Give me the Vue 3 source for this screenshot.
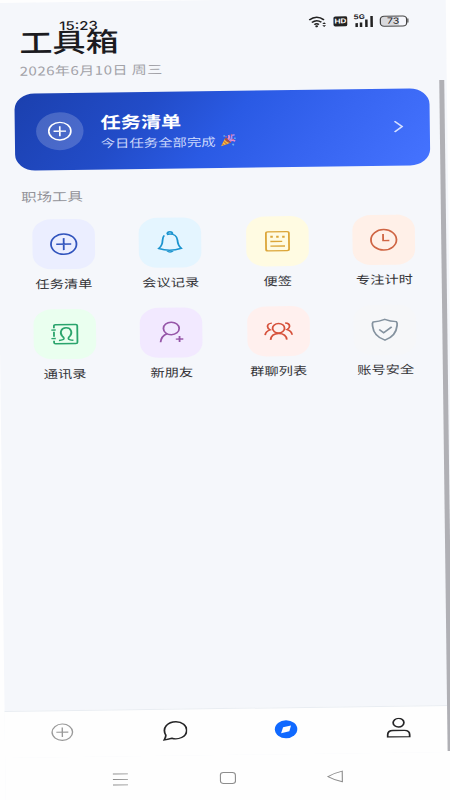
<script setup>
const tools = [
  { name: '任务清单', icon: 'plus', tone: 'indigo' },
  { name: '会议记录', icon: 'bell', tone: 'sky' },
  { name: '便签', icon: 'note', tone: 'yellow' },
  { name: '专注计时', icon: 'clock', tone: 'orange' },
  { name: '通讯录', icon: 'contacts', tone: 'green' },
  { name: '新朋友', icon: 'friend', tone: 'purple' },
  { name: '群聊列表', icon: 'group', tone: 'red' },
  { name: '账号安全', icon: 'shield', tone: 'gray' },
]
</script>

<template>
  <div class="viewport">
    <div class="screen">
      <div class="status">
        <span class="time">15:23</span>
        <div class="signals">
          <svg class="wifi" viewBox="0 0 15 12">
            <path d="M.6 4.300Q6.500-1 12.400 4.300M2.700 6.700Q6.500 3.300 10.300 6.700M4.700 9Q6.500 7.300 8.300 9" fill="none" stroke="#222" stroke-width="1.500" />
            <circle cx="6.500" cy="10.700" r="1.100" fill="#222" />
            <path d="M11 8.500l1.500-1.800 1.500 1.800zM11 9.700l1.500 1.800 1.500-1.800z" fill="#222" />
          </svg>
          <span class="hd">HD</span>
          <div class="cell">
            <span class="gen">5G</span>
            <svg viewBox="0 0 16 12">
              <path d="M2.500 8v4M6 7.500V12M10.300 4.500V12M14.500 1v11" fill="none" stroke="#222" stroke-width="2" />
            </svg>
          </div>
          <div class="battery"><span>73</span></div>
        </div>
      </div>

      <main class="content">
        <h1>工具箱</h1>
        <p class="date">2026年6月10日 周三</p>

        <section class="banner">
          <div class="badge">
            <svg viewBox="0 0 24 24"><circle cx="12" cy="12" r="10.600" /><path d="M12 6v12M6 12h12" /></svg>
          </div>
          <div class="copy">
            <strong>任务清单</strong>
            <div class="sub">
              <span>今日任务全部完成</span>
              <svg viewBox="0 0 16 16">
                <path d="M1 15L5 5.500 10.500 11z" fill="#f5b942" />
                <path d="M3.500 9l3.500 4M2.200 12l1.800 2" stroke="#c96b2c" stroke-width="1" fill="none" />
                <ellipse cx="7.800" cy="8.200" rx="1.800" ry="3.900" transform="rotate(-45 7.800 8.200)" fill="#a75045" />
                <path d="M8 7Q10 5 8.600 1.500M10 9q2-2 5 0" stroke="#e58bd0" stroke-width="1.700" fill="none" />
                <path d="M9 8q3-1 2.500-4t3-2.500" stroke="#b78ae8" stroke-width="1.700" fill="none" />
                <path d="M3.500 2.500h1.600M12.500 12.300l1 2M14 5.500h1.500" stroke="#62b3f3" stroke-width="1.600" />
                <path d="M5.500 4l1-1M12.500 6.500l1 1M10.800 1.200h1" stroke="#ee6570" stroke-width="1.500" />
              </svg>
            </div>
          </div>
          <svg class="arrow" viewBox="0 0 8 12"><path d="M.8 .6l6 5.400-6 5.400" /></svg>
        </section>

        <h2>职场工具</h2>
        <div class="grid">
          <div v-for="tool in tools" :key="tool.name" class="tool">
            <div class="tile" :class="tool.tone">
              <svg viewBox="0 0 24 24">
                <template v-if="tool.icon === 'plus'">
                  <circle cx="12" cy="12" r="10.200" /><path d="M12 6v12M6 12h12" />
                </template>
                <template v-else-if="tool.icon === 'bell'">
                  <path d="M7.500 4.600Q6.300 6 6.100 9.500C6 13.500 5 15.700 3 17.700Q12 21.500 21 17.700C19 15.700 18.200 13.500 18 9.500 17.700 5.500 15 3.300 12 3.300q-1.300 0-2.400.5M9.900 3.300Q9.900 1 12 1t2.100 2.300M9.500 19.900q2.500 3 5 0" />
                </template>
                <template v-else-if="tool.icon === 'note'">
                  <rect x="2.800" y="2.500" width="18.400" height="19" rx="1.500" />
                  <path d="M6.300 12.200h9.500M6.300 16.800h11.700" />
                  <path d="M6.300 7.500h2M11 7.500h2M15.800 7.500h2" stroke-width="2" />
                </template>
                <template v-else-if="tool.icon === 'clock'">
                  <circle cx="12" cy="12" r="10.200" /><path d="M11.500 6.300v6.500h5" />
                </template>
                <template v-else-if="tool.icon === 'contacts'">
                  <path d="M3.300 6V3.800Q3.300 2.500 4.600 2.500H20.700Q22 2.500 22 3.800V20.200Q22 21.500 20.700 21.500H4.600Q3.300 21.500 3.300 20.200V18.500M3.300 9.500v5M1.200 7.800h3.500M1.200 16.300h3.500" />
                  <path d="M7.200 18.200q3.700-.2 4-1.700.1-1.300-1.300-2.500C7.700 11 8.800 5.700 13 5.700S18.300 11 16.100 14q-1.400 1.200-1.300 2.500.3 1.500 4 1.700" />
                </template>
                <template v-else-if="tool.icon === 'friend'">
                  <circle cx="12.200" cy="7.800" r="6.300" />
                  <path d="M8.700 13Q4 15.300 3.500 21.500M18.700 15.500v6M15.700 18.500h6" />
                </template>
                <template v-else-if="tool.icon === 'group'">
                  <circle cx="12" cy="9" r="4.800" />
                  <path d="M5.500 20.500q.6-6.300 6.500-6.300t6.500 6.300M6.700 3.800Q3.200 4 3.200 7.200q0 2 2 3.300Q1.700 11.700 1.200 15.700M17.300 3.800Q20.800 4 20.800 7.200q0 2-2 3.300 3.500 1.200 4 5.200" />
                </template>
                <template v-else>
                  <path d="M12 1.500Q16.500 3.700 21.300 4Q22.200 5 21.800 8C21.200 15 17.500 20 12 22.300 6.500 20 2.800 15 2.200 8Q1.800 5 2.700 4Q7.500 3.700 12 1.500Z" />
                  <path d="M7.500 11.700l3.500 3.300 6.500-5.800" />
                </template>
              </svg>
            </div>
            <span>{{ tool.name }}</span>
          </div>
        </div>
      </main>

      <nav class="tabs">
        <svg class="muted" viewBox="0 0 20 20"><circle cx="10" cy="10" r="8.200" /><path d="M10 5.200v9.600M5.200 10h9.600" /></svg>
        <svg viewBox="0 0 20 20"><path d="M1.300 19.300C2 17.500 3 16 2.700 14.200-.5 7 4.500.900 11 1c5 .1 8.500 4 8.500 8.500 0 7-7 10-12 8z" /></svg>
        <svg viewBox="0 0 20 20"><circle cx="10" cy="10" r="9" fill="#1069ff" stroke="none" /><path d="M14 6.300l-1.400 5.700-6.600 1.900 1.600-5.800z" fill="#fff" stroke="none" /></svg>
        <svg viewBox="0 0 20 20"><circle cx="10" cy="5" r="4.300" /><path d="M1.200 19.200v-2Q1.200 12.800 5.500 12.800h9q4.300 0 4.300 4.400v2z" /></svg>
      </nav>
      <div class="system">
        <svg viewBox="0 0 14 14"><path d="M1 1.500h12M1 7h12M1 12.500h12" /></svg>
        <svg viewBox="0 0 14 14"><rect x="1" y="1.500" width="12" height="11" rx="2.500" /></svg>
        <svg viewBox="0 0 14 14"><path d="M12.500 1.700v10.600Q6 10.500 1 7 6 3.500 12.500 1.700z" /></svg>
      </div>
      <div class="scrollbar"></div>
    </div>
  </div>
</template>

<style>
body { margin: 0; background: #fefefe; }
</style>

<style scoped>
.viewport { width: 450px; height: 800px; overflow: hidden; background: #fefefe; }
.screen {
  position: relative;
  display: flex;
  flex-direction: column;
  width: 360px;
  height: 820px;
  background: #f5f7fb;
  color: #1b1b1f;
  font-family: "Noto Sans CJK SC", sans-serif;
  transform-origin: 0 0;
  transform: matrix(1.25, -0.0169, 0.0125, 1, -4.3, 3);
}
h1, h2, p { margin: 0; }
svg { display: block; }
.status {
  position: absolute;
  top: 14px;
  left: 50.500px;
  right: 30.500px;
  height: 18px;
  display: flex;
  align-items: center;
  justify-content: space-between;
}
.time { padding-top: 2px; font: 500 12px/18px Inter, sans-serif; }
.signals { display: flex; align-items: center; gap: 5px; }
.wifi { width: 15px; height: 12px; }
.hd {
  width: 11px; height: 10px; border-radius: 1.500px; background: #222; color: #fff;
  font: 700 6.500px/10px Inter, sans-serif; text-align: center;
}
.cell { position: relative; }
.cell svg { width: 16px; height: 12px; }
.gen { position: absolute; left: 0; top: -1px; font: 700 6.500px/7px Inter, sans-serif; }
.battery {
  position: relative; box-sizing: border-box; width: 21.500px; height: 11px; margin-right: 1px;
  border: 1px solid #444; border-radius: 3.500px;
  background: linear-gradient(90deg, #d8d9dd 73%, #f5f6fb 73%);
  font: 400 8.500px/9px Inter, sans-serif; text-align: center;
}
.battery::after { content: ""; position: absolute; right: -2.500px; top: 2.500px; width: 1.500px; height: 4px; background: #555; }
.content { height: 708px; box-sizing: border-box; padding: 20px 14px 0; }
h1 { padding-left: 4.500px; font-size: 26.500px; line-height: 38px; font-weight: 500; }
.date { padding: 0 0 13px 4.500px; height: 19.500px; font-size: 12px; line-height: 19px; color: #a2a2a8; letter-spacing: .4px; white-space: nowrap; }
.banner {
  display: flex; align-items: center; box-sizing: border-box; height: 77.500px;
  margin: 0 .5px 0 -.5px;
  padding: 0 21px 0 17.500px; border-radius: 16px;
  background: linear-gradient(125deg, #1b40ae 0%, #224cc8 30%, #2a5ae4 50%, #3664f0 70%, #4573ff 100%);
}
.badge { display: flex; align-items: center; justify-content: center; width: 38px; height: 38px; border-radius: 50%; background: rgba(255, 255, 255, .19); }
.badge svg { width: 20px; height: 20px; fill: none; stroke: #fff; stroke-width: 1.600; }
.copy { flex: 1; padding: 1px 0 0 13.500px; color: #fff; }
.copy strong { display: block; font-size: 16.200px; line-height: 22px; font-weight: 700; }
.sub { display: flex; align-items: center; gap: 3.500px; font-size: 11.500px; line-height: 20px; color: #cbd7fb; }
.sub svg { width: 13px; height: 13px; }
.arrow { width: 8px; height: 12px; fill: none; stroke: #d5e0ff; stroke-width: 1.500; }
h2 { padding: 17px 0 0 4.500px; font-size: 12.300px; line-height: 18px; font-weight: 400; color: #929298; }
.grid { display: grid; grid-template-columns: repeat(4, 1fr); grid-auto-rows: 90px; margin: 13.500px -5px 0; }
.tool { display: flex; flex-direction: column; align-items: center; font-size: 11.400px; line-height: 18px; color: #343438; }
.tool > span { margin-top: 5px; }
.tile { display: flex; align-items: center; justify-content: center; width: 50px; height: 50px; border-radius: 15px; }
.tile svg { width: 24px; height: 24px; fill: none; stroke: currentColor; stroke-width: 1.450; }
.indigo { background: #ebeeff; color: #3154bd; }
.sky { background: #e4f5ff; color: #1c94cf; }
.yellow { background: #fffbe2; color: #dca63a; }
.orange { background: #fff0e8; color: #cf6544; }
.green { background: #eaffef; color: #2aa46c; }
.purple { background: #f2e9ff; color: #9656a8; }
.red { background: #fff0ee; color: #d6513b; }
.gray { background: #f6f7f9; color: #84929f; }
.tabs { display: grid; grid-template-columns: repeat(4, 1fr); justify-items: center; align-items: start; height: 47px; padding: 11px 0 0 1px; box-sizing: border-box; background: #fefefe; border-top: 1px solid #e9edf2; }
.tabs svg { width: 20px; height: 20px; fill: none; stroke: #242426; stroke-width: 1.400; }
.tabs .muted { stroke: #999; stroke-width: 1.100; }
.system { flex: 1; display: flex; justify-content: center; align-items: flex-start; gap: 72px; padding: 16px 4.500px 0 0; background: #fefefe; }
.system svg { width: 14px; height: 14px; fill: none; stroke: #8d8d8d; stroke-width: .900; }
.scrollbar { position: absolute; left: 353.700px; top: 83px; width: 4px; height: 671px; background: #b0b0b5; }
</style>
